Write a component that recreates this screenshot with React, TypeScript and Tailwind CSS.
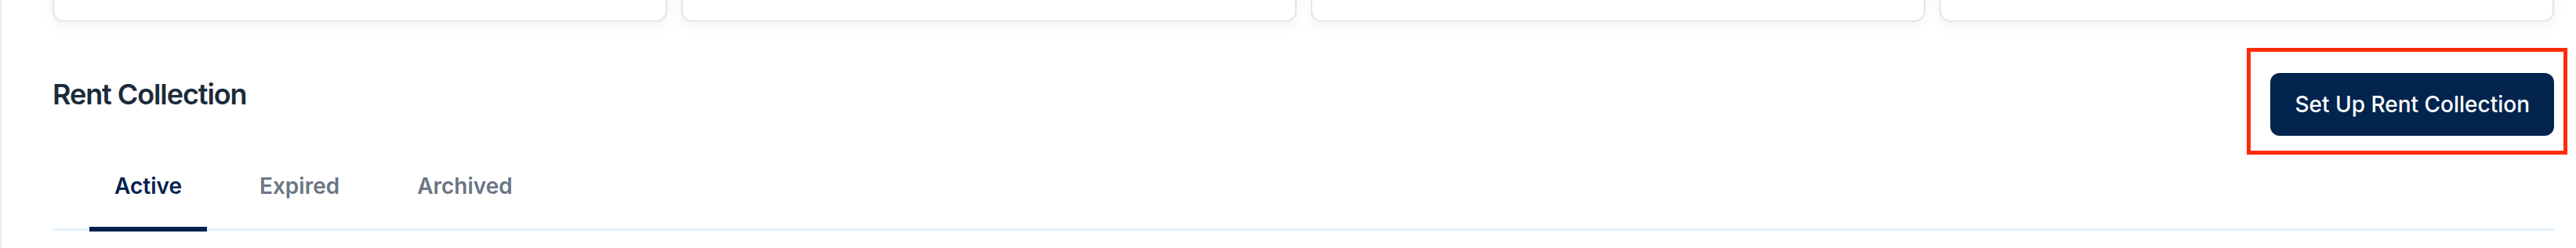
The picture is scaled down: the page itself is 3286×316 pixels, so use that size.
const tabs = ["Active", "Expired", "Archived"];

export default function App() {
  return (
    <div
      className="relative min-h-[316px] w-full overflow-hidden border-l-2 border-[#ebebeb] bg-white pl-[65px] pr-[28px]"
      style={{ fontFamily: "Inter, 'Noto Sans', sans-serif" }}
    >
      {/* summary cards, cut off at the top */}
      <div className="-mt-[92px] grid grid-cols-4 gap-[18px]">
        {[0, 1, 2, 3].map((i) => (
          <div
            key={i}
            className="h-[120px] rounded-[14px] border-2 border-[#e3e5ee] bg-white shadow-[0_6px_16px_rgba(30,40,80,0.05)]"
          />
        ))}
      </div>

      <div className="mt-[65px] flex items-start justify-between">
        <h2 className="text-[36px] font-semibold leading-[54px] tracking-[-0.03em] text-[#1c2b3b]">
          Rent Collection
        </h2>
        <button className="flex h-[80px] items-center rounded-[12px] bg-[#03244f] px-[31px] text-[28px] font-medium text-white">
          Set Up Rent Collection
        </button>
      </div>

      <div className="mt-[28px] flex gap-[35px] border-b-[3px] border-[#e3f1fb] pl-[47px]">
        {tabs.map((t, i) => (
          <button
            key={t}
            className={`relative px-[32px] pb-[34px] pt-[16px] text-[28px] font-semibold leading-[40px] ${
              i === 0 ? "text-[#03214d]" : "text-[#6b7585]"
            }`}
          >
            {t}
            {i === 0 && (
              <span className="absolute bottom-[-4px] left-0 right-0 h-[6px] bg-[#03214d]" />
            )}
          </button>
        ))}
      </div>

      {/* highlight box around the button */}
      <div className="pointer-events-none absolute left-[2864px] top-[61px] h-[136px] w-[409px] border-[5px] border-[#ff2a0a]" />
    </div>
  );
}
